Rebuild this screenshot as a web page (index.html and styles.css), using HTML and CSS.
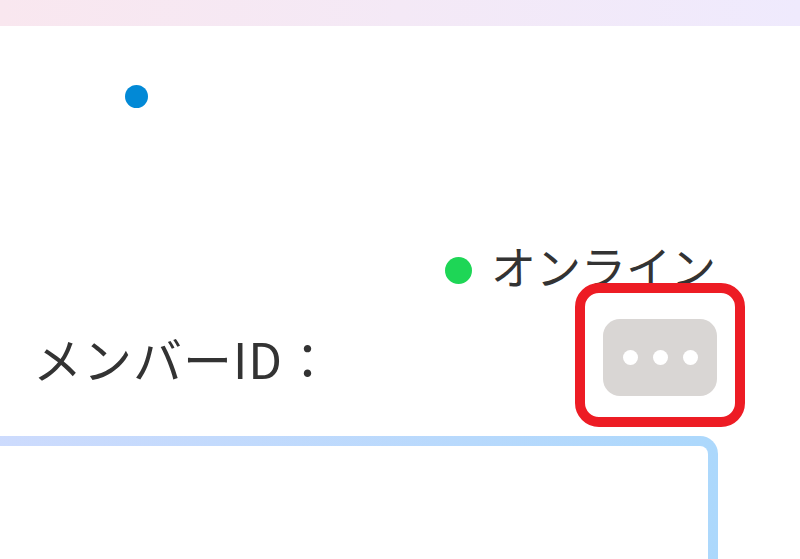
FILE: index.html
```html
<!DOCTYPE html>
<html lang="ja">
<head>
  <meta charset="UTF-8">
  <meta name="viewport" content="width=device-width, initial-scale=1.0">
  <title>メンバー情報</title>
  <link rel="stylesheet" href="styles.css">
</head>
<body>

  <!-- Header strip -->
  <div class="topbar"></div>

  <!-- Profile -->
  <div class="profile">
    <span class="avatar-dot"></span>

    <div class="status">
      <span class="status-dot"></span>
      <span class="status-text">オンライン</span>
    </div>

    <div class="member-row">
      <span class="member-label">メンバーID：</span>
      <div class="more-wrap">
        <button class="more-btn" aria-label="その他">
          <span></span><span></span><span></span>
        </button>
        <div class="highlight"></div>
      </div>
    </div>

    <div class="card"></div>
  </div>

</body>
</html>
```

FILE: styles.css
```css
body { margin: 0; background: #fff; color: #333; font-family: "Noto Sans CJK JP", "Noto Sans", sans-serif; overflow: hidden; }
.topbar { height: 26px; background: linear-gradient(90deg, #f9e7ef, #f4e9f6 50%, #efeafd); }
.profile { display: flex; flex-direction: column; }
.avatar-dot { display: block; width: 23px; height: 23px; border-radius: 50%; background: #0289d6; margin: 59px 0 0 125px; }
.status { display: flex; align-items: center; justify-content: flex-end; gap: 19px; margin-top: 129px; padding-right: 84px; height: 58px; }
.status-dot { width: 27px; height: 27px; border-radius: 50%; background: #1ed656; margin-top: 8px; }
.status-text { font-size: 45px; line-height: 58px; }
.member-row { display: flex; align-items: center; justify-content: space-between; margin-top: 24px; padding: 0 83px 0 33px; }
.member-label { font-size: 49px; line-height: 58px; letter-spacing: 1px; }
.more-wrap { position: relative; }
.more-btn { display: flex; align-items: center; justify-content: center; gap: 15px; width: 114px; height: 77px; border: none; border-radius: 17px; background: #d9d6d4; padding: 0; }
.more-btn span { width: 15px; height: 15px; border-radius: 50%; background: #fff; }
.highlight { position: absolute; top: -36px; left: -28px; right: -28px; bottom: -31px; border: 10px solid #ed1c24; border-radius: 24px; }
.card { height: 200px; margin: 40px 82px 0 -30px; border: 10px solid transparent; border-radius: 18px; background: linear-gradient(#fff, #fff) padding-box, linear-gradient(90deg, #cedbfd, #acd8fc) border-box; }
```
